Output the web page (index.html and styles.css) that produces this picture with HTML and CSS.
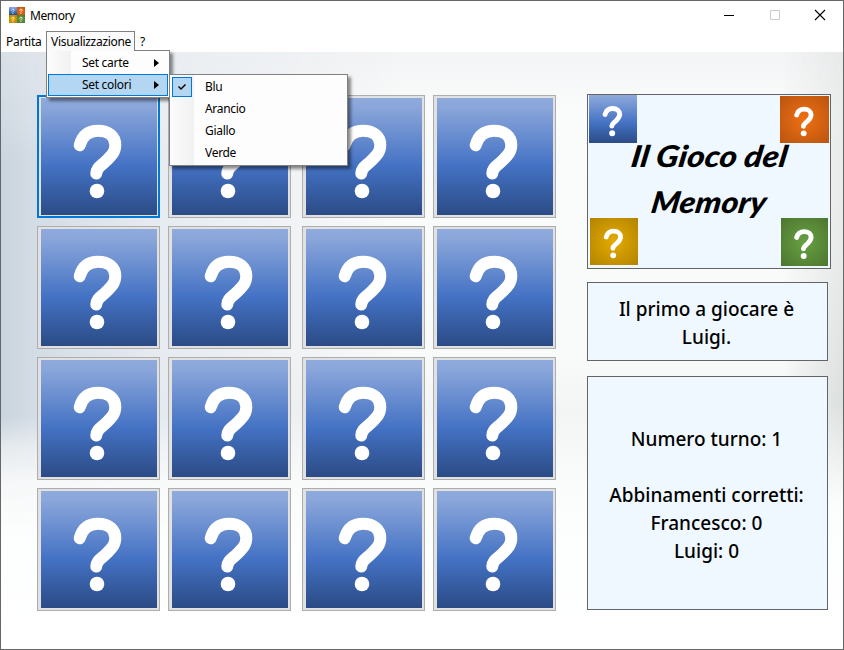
FILE: index.html
```
<!DOCTYPE html>
<html lang="it">
<head>
<meta charset="utf-8">
<title>Memory</title>
<link rel="stylesheet" href="styles.css">
</head>
<body>
<svg class="defs" width="0" height="0">
  <symbol id="q" viewBox="0 0 116 117">
    <path d="M38.700 47.300C41.500 36.500 48.500 32.800 57 32.800C67.500 32.800 74.300 38.500 74.300 47C74.300 54 70.500 57.500 65.500 62.500C59.500 68.500 55.600 69.500 55.300 75.500" fill="none" stroke="#fff" stroke-width="12" stroke-linecap="round"/>
    <circle cx="56" cy="93" r="7.300" fill="#fff"/>
  </symbol>
</svg>
<div class="window">
  <header class="titlebar">
    <div class="appicon">
      <svg class="blue"><use href="#q"/></svg><svg class="orange"><use href="#q"/></svg>
      <svg class="yellow"><use href="#q"/></svg><svg class="green"><use href="#q"/></svg>
    </div>
    <span class="caption">Memory</span>
    <div class="controls">
      <svg viewBox="0 0 12 12"><path d="M1 6.500H11" stroke="#000"/></svg>
      <svg viewBox="0 0 12 12"><path d="M1.500 1.500H10.500V10.500H1.500Z" fill="none" stroke="#ccc"/></svg>
      <svg viewBox="0 0 12 12"><path d="M1 1L11 11M11 1L1 11" stroke="#000" stroke-width="1.100"/></svg>
    </div>
  </header>
  <nav class="menubar">
    <span class="m-partita">Partita</span>
    <div class="m-open"><span>Visualizzazione</span>
      <div class="menu">
        <div class="item"><span>Set carte</span><i class="arrow"></i></div>
        <div class="item active"><span>Set colori</span><i class="arrow"></i></div>
        <div class="submenu">
          <div class="item"><b class="check"><svg viewBox="0 0 18 18"><path d="M5.500 8.500L8 11L12.500 6.500" fill="none" stroke="#000" stroke-width="1.500"/></svg></b><span>Blu</span></div>
          <div class="item"><span>Arancio</span></div>
          <div class="item"><span>Giallo</span></div>
          <div class="item"><span>Verde</span></div>
        </div>
      </div>
    </div>
    <span class="m-help">?</span>
  </nav>
  <main class="client">
    <section class="board">
      <div class="card focus"><svg><use href="#q"/></svg></div><div class="card"><svg><use href="#q"/></svg></div><div class="card"><svg><use href="#q"/></svg></div><div class="card"><svg><use href="#q"/></svg></div>
      <div class="card"><svg><use href="#q"/></svg></div><div class="card"><svg><use href="#q"/></svg></div><div class="card"><svg><use href="#q"/></svg></div><div class="card"><svg><use href="#q"/></svg></div>
      <div class="card"><svg><use href="#q"/></svg></div><div class="card"><svg><use href="#q"/></svg></div><div class="card"><svg><use href="#q"/></svg></div><div class="card"><svg><use href="#q"/></svg></div>
      <div class="card"><svg><use href="#q"/></svg></div><div class="card"><svg><use href="#q"/></svg></div><div class="card"><svg><use href="#q"/></svg></div><div class="card"><svg><use href="#q"/></svg></div>
    </section>
    <aside class="side">
      <div class="panel logo">
        <svg class="corner tl blue"><use href="#q"/></svg>
        <svg class="corner tr orange"><use href="#q"/></svg>
        <svg class="corner bl yellow"><use href="#q"/></svg>
        <svg class="corner br green"><use href="#q"/></svg>
        <svg class="script" viewBox="0 0 242 173">
          <text transform="translate(42 72) skewX(-9)" textLength="156" lengthAdjust="spacingAndGlyphs">Il Gioco del</text>
          <text transform="translate(62 118) skewX(-9)" textLength="115" lengthAdjust="spacingAndGlyphs">Memory</text>
        </svg>
      </div>
      <div class="panel first"><span>Il primo a giocare è</span><span>Luigi.</span></div>
      <div class="panel score"><span>Numero turno: 1</span><span>&nbsp;</span><span>Abbinamenti corretti:</span><span>Francesco: 0</span><span>Luigi: 0</span></div>
    </aside>
  </main>
</div>
</body>
</html>
```
FILE: styles.css
```
* { box-sizing: border-box; }
body { margin: 0; font: 12px "Noto Sans", sans-serif; color: #000; }
.defs { position: absolute; }
.window { width: 844px; height: 650px; border: 1px solid #666; display: flex; flex-direction: column; background: #fff; overflow: hidden; }
.titlebar { height: 30px; display: flex; align-items: center; padding-left: 8px; }
.appicon { width: 16px; height: 16px; display: grid; grid-template-columns: 8px 8px; grid-template-rows: 8px 8px; margin-top: -2px; }
.appicon svg { width: 8px; height: 8px; }
.caption { margin: -1px 0 0 5px; letter-spacing: -0.4px; }
.controls { margin: -3px 17px 0 auto; display: flex; gap: 33.500px; }
.controls svg { width: 12px; height: 12px; }
.menubar { height: 21px; display: flex; line-height: 21px; letter-spacing: -0.3px; }
.m-partita { width: 45px; padding-left: 5px; }
.m-open { position: relative; width: 89px; height: 20px; border: 1px solid #808080; border-bottom: 0; padding-left: 4px; background: #fafafa; z-index: 5; white-space: nowrap; line-height: 20px; }
.m-help { padding-left: 5px; }
.menu { position: absolute; left: -1px; top: 18px; width: 124px; height: 48px; border: 1px solid #808080; padding: 1px; background: linear-gradient(90deg, #fcfcfc, #f1f1f1 24px, #fdfdfd 24px); box-shadow: 3px 3px 3px rgba(0,0,0,.45); }
.menu::before { content: ""; position: absolute; left: 0; top: -1px; width: 87px; height: 1px; background: #fafafa; }
.item { height: 22px; line-height: 19px; padding: 0 0 2px 34px; display: flex; align-items: center; position: relative; }
.active { background: #b3d7f3; border: 1px solid #0078d7; padding-left: 33px; }
.arrow { position: absolute; left: 106px; top: 7px; border-left: 5px solid #000; border-top: 4px solid transparent; border-bottom: 4px solid transparent; }
.active .arrow { left: 105px; top: 6px; }
.submenu { position: absolute; left: 122px; top: 23px; width: 179px; height: 92px; border: 1px solid #808080; padding: 1px; background: linear-gradient(90deg, #fcfcfc, #f1f1f1 24px, #fdfdfd 24px); box-shadow: 3px 3px 3px rgba(0,0,0,.45); }
.check { position: absolute; left: 1px; top: 1px; width: 20px; height: 20px; border: 1px solid #0078d7; background: #b3d7f3; }
.check svg { display: block; width: 18px; height: 18px; }
.client { flex: 1; display: flex; position: relative; z-index: 0; padding: 42px 0 0 36px; background: linear-gradient(#f3f4f5 0, #fafbfb 60px, #f9fafa 300px, #f3f5f5 360px, #fafbfb 430px, #fdfefe 500px, #fff 600px); }
.client::before, .client::after { content: ""; position: absolute; z-index: -1; top: 0; bottom: 0; }
.client::before { left: 0; width: 400px; background: linear-gradient(90deg, #c9d4de, #d3dbe4 30px, rgba(222,229,236,.75) 150px, rgba(240,243,246,0)); -webkit-mask-image: linear-gradient(rgba(0,0,0,.65), #000 110px, #000 365px, rgba(0,0,0,.4) 395px, rgba(0,0,0,.08) 430px, transparent 480px); mask-image: linear-gradient(rgba(0,0,0,.65), #000 110px, #000 365px, rgba(0,0,0,.4) 395px, rgba(0,0,0,.08) 430px, transparent 480px); }
.client::after { right: 0; width: 60px; background: linear-gradient(270deg, #dbdfde, rgba(235,238,237,0)); -webkit-mask-image: linear-gradient(rgba(0,0,0,.5), rgba(0,0,0,.6) 200px, #000 350px, rgba(0,0,0,.4) 400px, transparent 450px); mask-image: linear-gradient(rgba(0,0,0,.5), rgba(0,0,0,.6) 200px, #000 350px, rgba(0,0,0,.4) 400px, transparent 450px); }
.board { display: grid; grid-template-columns: 131px 134px 131px 123px; grid-auto-rows: 131px; width: 519px; }
.card { width: 123px; height: 123px; margin-top: 1px; border: 1px solid #adadad; background: #e1e1e1; padding: 2px 2px 2px 3px; }
.card svg { display: block; width: 116px; height: 117px; background: linear-gradient(#8faadc 0%, #8aa6da 8%, #4472c4 58%, #2b4b85 100%); }
.focus { border: 2px solid #0078d7; padding: 1px 1px 1px 2px; }
.side { width: 244px; margin-left: 31px; display: flex; flex-direction: column; }
.panel { width: 241px; border: 1px solid #646464; background: #f0f8ff; text-align: center; font: 500 19px/28px "Noto Sans", sans-serif; }
.panel > span { display: block; position: relative; left: -1px; }
.logo { position: relative; width: 244px; height: 175px; }
.first { height: 79px; margin-top: 13px; padding-top: 12px; }
.score { height: 234px; margin-top: 15px; padding-top: 48px; }
.blue { background: linear-gradient(#8faadc, #4472c4 58%, #2b4b85); }
.orange { background: radial-gradient(#f07014, #b9540f); }
.yellow { background: radial-gradient(#e5ab00, #b18300); }
.green { background: radial-gradient(#68a042, #4c7630); }
.corner { position: absolute; width: 48px; height: 48px; }
.tl { left: 1px; top: 0; }
.tr { right: 1px; top: 1px; width: 49px; height: 47px; }
.bl { left: 2px; bottom: 3px; height: 47px; }
.br { right: 2px; bottom: 2px; width: 47px; }
.script { position: absolute; left: 0; top: 0; width: 242px; height: 173px; font: italic 900 30px Lato, sans-serif; }
```
